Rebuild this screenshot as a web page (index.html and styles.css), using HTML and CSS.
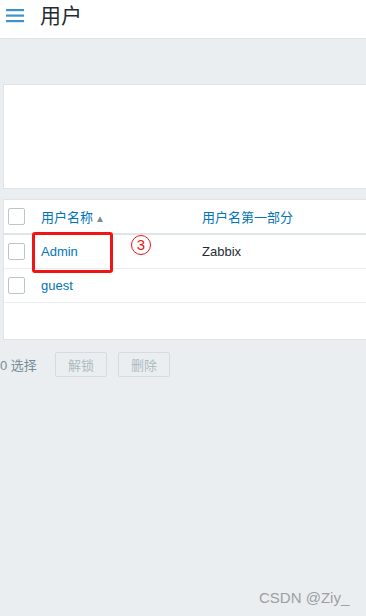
FILE: index.html
```html
<!DOCTYPE html>
<html lang="zh">
<head>
  <meta charset="UTF-8">
  <meta name="viewport" content="width=device-width, initial-scale=1.0">
  <title>用户</title>
  <link rel="stylesheet" href="styles.css">
</head>
<body>

  <header class="page-header">
    <svg class="menu-icon" width="18" height="14" viewBox="0 0 18 14">
      <rect x="0" y="0" width="18" height="2.2" fill="#3f93cd"/>
      <rect x="0" y="5.5" width="18" height="2.2" fill="#3f93cd"/>
      <rect x="0" y="11" width="18" height="2.2" fill="#3f93cd"/>
    </svg>
    <h1>用户</h1>
  </header>

  <main class="content">
    <div class="filter-panel"></div>

    <div class="table-panel">
      <table class="list-table">
        <thead>
          <tr>
            <th class="cell-check"><span class="checkbox"></span></th>
            <th class="cell-name"><a href="#">用户名称</a><span class="sort-arrow">▲</span></th>
            <th><a href="#">用户名第一部分</a></th>
          </tr>
        </thead>
        <tbody>
          <tr>
            <td class="cell-check"><span class="checkbox"></span></td>
            <td class="cell-name"><a href="#">Admin</a></td>
            <td>Zabbix</td>
          </tr>
          <tr>
            <td class="cell-check"><span class="checkbox"></span></td>
            <td class="cell-name"><a href="#">guest</a></td>
            <td></td>
          </tr>
        </tbody>
      </table>
      <div class="mark-box"></div>
      <div class="mark-num">3</div>
    </div>

    <div class="action-bar">
      <span class="selected-count">0 选择</span>
      <button disabled>解锁</button>
      <button disabled>删除</button>
    </div>
  </main>

  <div class="watermark">CSDN @Ziy_</div>

</body>
</html>
```

FILE: styles.css
```css
body {
  margin: 0;
  padding: 0;
  font-family: "Liberation Sans", Arial, "Noto Sans CJK SC", sans-serif;
  background-color: #ebeef0;
  color: #1f2c33;
  height: 616px;
  overflow: hidden;
  position: relative;
}

.page-header {
  display: flex;
  align-items: center;
  height: 38px;
  background-color: #fff;
  border-bottom: 1px solid #dfe4e7;
  padding-left: 6px;
}

.menu-icon {
  margin-top: -6px;
}

.page-header h1 {
  margin: -10px 0 0 16px;
  font-size: 21px;
  font-weight: normal;
  color: #1f2c33;
}

.content {
  padding-top: 45px;
}

.filter-panel {
  margin-left: 3px;
  height: 103px;
  background-color: #fff;
  border: 1px solid #dfe4e7;
  border-right: none;
}

.table-panel {
  position: relative;
  margin-left: 3px;
  margin-top: 10px;
  height: 139px;
  background-color: #fff;
  border: 1px solid #dfe4e7;
  border-right: none;
}

.list-table {
  width: 100%;
  border-collapse: collapse;
  font-size: 13px;
}

.list-table th,
.list-table td {
  height: 33px;
  padding: 0;
  text-align: left;
  font-weight: normal;
  border-bottom: 1px solid #ebeef0;
}

.list-table th {
  height: 33px;
  border-bottom: 2px solid #dfe4e7;
}

.list-table a {
  color: #0275b8;
  text-decoration: none;
}

.cell-check {
  width: 33px;
  padding-left: 4px !important;
}

.cell-name {
  width: 161px;
}

.checkbox {
  display: block;
  width: 15px;
  height: 15px;
  border: 1px solid #bcc5ca;
  border-radius: 2px;
  background-color: #fff;
}

.sort-arrow {
  font-size: 10px;
  color: #768d99;
  margin-left: 2px;
}

.mark-box {
  position: absolute;
  left: 28px;
  top: 32px;
  width: 75px;
  height: 35px;
  border: 3px solid #f01414;
  border-radius: 3px;
}

.mark-num {
  position: absolute;
  left: 127px;
  top: 35px;
  width: 18px;
  height: 18px;
  border: 1.5px solid #f01414;
  border-radius: 50%;
  color: #f01414;
  font-size: 15px;
  line-height: 18px;
  text-align: center;
}

.action-bar {
  display: flex;
  align-items: center;
  margin-top: 12px;
  height: 25px;
}

.selected-count {
  font-size: 13px;
  color: #768d99;
  width: 55px;
}

.action-bar button {
  height: 25px;
  width: 52px;
  margin-right: 11px;
  padding: 0;
  font-family: inherit;
  font-size: 13px;
  color: #acbbc2;
  background-color: #ebeef0;
  border: 1px solid #d5dbde;
  border-radius: 2px;
}

.watermark {
  position: absolute;
  left: 259px;
  top: 589px;
  font-size: 15px;
  color: #9aa0a4;
}
```
